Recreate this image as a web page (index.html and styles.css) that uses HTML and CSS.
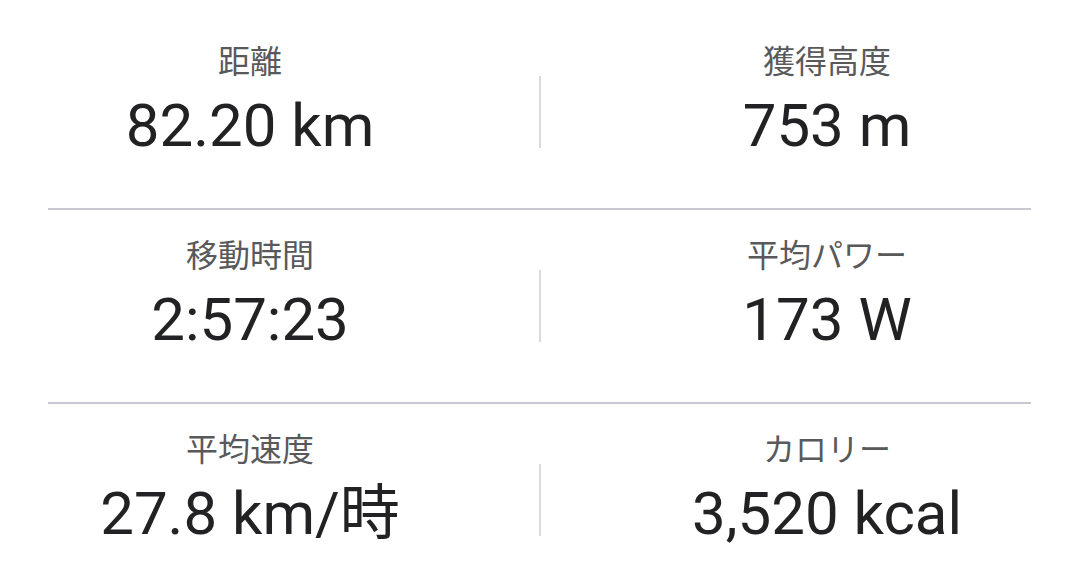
FILE: index.html
```html
<!DOCTYPE html>
<html lang="ja">
<head>
    <meta charset="UTF-8">
    <meta name="viewport" content="width=device-width, initial-scale=1.0">
    <title>アクティビティ統計</title>
    <link rel="stylesheet" href="styles.css">
</head>
<body>
    <div class="stats">
        <div class="stat-row">
            <div class="stat">
                <div class="stat-label">距離</div>
                <div class="stat-value">82.20 km</div>
            </div>
            <div class="divider"></div>
            <div class="stat">
                <div class="stat-label">獲得高度</div>
                <div class="stat-value">753 m</div>
            </div>
        </div>
        <div class="rule"></div>
        <div class="stat-row">
            <div class="stat">
                <div class="stat-label">移動時間</div>
                <div class="stat-value">2:57:23</div>
            </div>
            <div class="divider"></div>
            <div class="stat">
                <div class="stat-label">平均パワー</div>
                <div class="stat-value">173 W</div>
            </div>
        </div>
        <div class="rule"></div>
        <div class="stat-row">
            <div class="stat">
                <div class="stat-label">平均速度</div>
                <div class="stat-value">27.8 km/時</div>
            </div>
            <div class="divider"></div>
            <div class="stat">
                <div class="stat-label">カロリー</div>
                <div class="stat-value">3,520 kcal</div>
            </div>
        </div>
    </div>
</body>
</html>
```

FILE: styles.css
```css
body {
    margin: 0;
    background-color: #fff;
    font-family: Roboto, "Noto Sans CJK JP", sans-serif;
}
.stats {
    padding-top: 16px;
}
.stat-row {
    display: grid;
    grid-template-columns: 539px 2px 1fr;
    align-items: start;
    padding: 23px 0 48px;
}
.stat {
    text-align: center;
}
.stat:first-child {
    padding-right: 39px;
}
.stat:last-child {
    padding-left: 33px;
}
.stat-label {
    font-family: "Noto Sans CJK JP", sans-serif;
    font-size: 32px;
    line-height: 40px;
    color: #59595b;
    margin-bottom: 13px;
}
.stat-value {
    font-size: 60px;
    line-height: 68px;
    color: #222224;
}
.divider {
    height: 72px;
    margin-top: 37px;
    background-color: #dadada;
}
.rule {
    height: 2px;
    margin: 0 49px 0 48px;
    background-color: #c9c7d1;
}
```
